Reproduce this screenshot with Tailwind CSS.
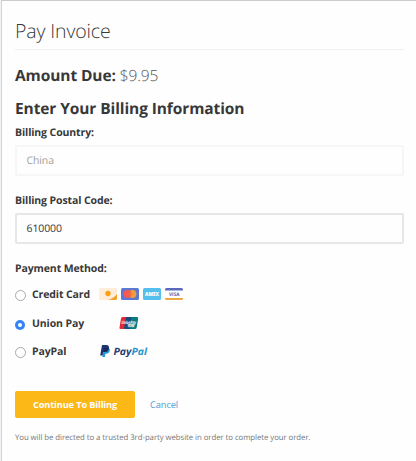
<!DOCTYPE html>
<html lang="en">
<head>
<meta charset="utf-8">
<title>Pay Invoice</title>
<script src="https://cdn.jsdelivr.net/npm/@tailwindcss/browser@4"></script>
</head>
<body class="bg-[#f0f4f7] font-['Open_Sans','Noto_Sans',sans-serif] text-[#383838] [text-rendering:geometricPrecision]">
<main class="ml-px flex h-[461px] flex-col overflow-hidden border-t border-l border-t-[#cbcbcb] border-l-[#ccd4da] bg-[#fefefe] pr-3 pl-[13px] whitespace-nowrap">
  <h1 class="h-[49px] border-b border-[#f0f0f0] pt-4 text-[19.5px] leading-[28px] font-light tracking-[-0.13px]"><span>Pay Invoice</span></h1>
  <p class="mt-[14px] text-[15.5px] leading-[22px] tracking-[-0.1px]"><b class="font-bold">Amount Due:</b> <span class="font-light text-[#555]">$9.95</span></p>
  <h2 class="mt-[11px] text-[15.5px] leading-[22px] font-bold tracking-[-0.1px]"><span>Enter Your Billing Information</span></h2>
  <form class="flex flex-col text-[10.5px] leading-[16px] font-bold tracking-[-0.11px]">
    <label class="mt-[6px]"><span>Billing Country:</span></label>
    <div class="mt-[4px] flex h-[31px] items-center rounded-[2px] border-2 border-[#f6f6f6] pl-[9.5px] font-normal text-[#a0a0a0]"><span>China</span></div>
    <label class="mt-[17px]"><span>Billing Postal Code:</span></label>
    <div class="mt-[4px] flex h-[31px] items-center rounded-[2px] border-2 border-[#e6e7e9] pl-[9.5px] font-normal"><span>610000</span></div>
    <label class="mt-[17px]"><span>Payment Method:</span></label>
    <div class="mt-[9px] flex h-4 items-center">
      <i class="mt-[3px] h-[11px] w-[11px] rounded-full border border-[#a8a8a8] bg-white"></i>
      <span class="mt-px ml-[6px] w-[67px]">Credit Card</span>
      <svg class="h-3 w-[84px]" viewBox="0 0 84 12" font-family="Open Sans" font-weight="800" letter-spacing="0">
        <rect width="18" height="12" rx="1.5" fill="#ffedda"/>
        <path d="M18 6V10.5Q18 12 16.500 12H9Q15 10 18 6Z" fill="#f6a128"/>
        <circle cx="9" cy="5.500" r="2.700" fill="#fca017"/>
        <rect x="22" width="18" height="12" rx="1.500" fill="#5f78cf"/>
        <circle cx="33.500" cy="6" r="3.900" fill="#f59b3d"/>
        <circle cx="28.500" cy="6" r="3.900" fill="#f45755"/>
        <path d="M31 3Q33.800 6 31 9Q28.200 6 31 3Z" fill="#ef7134"/>
        <rect x="44" width="18" height="12" rx="1.500" fill="#54bfec"/>
        <text x="46" y="8" font-size="5.500" textLength="14" lengthAdjust="spacingAndGlyphs" fill="#fff">AMEX</text>
        <path d="M66 2.500V1.500Q66 0 67.500 0H82.500Q84 0 84 1.500V2.500Z" fill="#5b68bd"/>
        <path d="M66 10H84V10.500Q84 12 82.500 12H67.500Q66 12 66 10.500Z" fill="#eca941"/>
        <text x="70" y="8" font-size="5" font-weight="700" textLength="10.500" lengthAdjust="spacingAndGlyphs" fill="#5565b0">VISA</text>
      </svg>
    </div>
    <div class="mt-[13px] flex h-4 items-center">
      <i class="mt-[3px] flex h-[10px] w-[10px] items-center justify-center rounded-full bg-[#3484f5]"><i class="h-1 w-1 rounded-full bg-white"></i></i>
      <span class="mt-[2px] ml-[7px] w-[87px]">Union Pay</span>
      <svg class="h-3 w-[20px] overflow-visible" viewBox="0 0 20 12" font-family="Open Sans" font-weight="700" letter-spacing="0">
        <path d="M3.500 0H9L6.500 12H1.500Q.3 12 .5 10.500L2 1.500Q2.200 0 3.500 0Z" fill="#df2938"/>
        <path d="M8 0H14L11.500 12H6.300Q5 12 5.200 10.500L6.800 1.500Q7 0 8 0Z" fill="#114d80"/>
        <path d="M13 0H18Q19.500 0 19.200 1.500L17.700 10.500Q17.500 12 16 12H10.800L12 1.300Q12.200 0 13 0Z" fill="#087b7e"/>
        <text x="2.500" y="6.500" font-size="4.500" font-style="italic" textLength="14.500" lengthAdjust="spacingAndGlyphs" fill="#fff">UnionPay</text>
        <text x="8.500" y="10" font-size="3.600" font-family="Noto Sans CJK SC" textLength="7" lengthAdjust="spacingAndGlyphs" fill="#fff">银联</text>
      </svg>
    </div>
    <div class="mt-[12px] flex h-4 items-center">
      <i class="mt-[3px] h-[11px] w-[11px] rounded-full border border-[#a8a8a8] bg-white"></i>
      <span class="mt-px ml-[6px] w-[68px]">PayPal</span>
      <svg class="h-3 w-[48px]" viewBox="0 0 48 12" font-family="Open Sans" font-weight="700" font-style="italic" letter-spacing="0">
        <path d="M4 3H8.600Q10.500 4 9.700 6Q9 8.800 6.300 8.800H5.400L4.900 12H2.300Z" fill="#209bd7"/>
        <path d="M2 0H6.300Q9.600 .2 8.900 3.500Q8.200 7 4.500 7H3.200L2.600 10.400H.2Z" fill="#20346f"/>
        <path d="M4 3H8.800Q8.300 6.900 4.500 7H3.300Z" fill="#1b285b"/>
        <text x="13.500" y="9.500" font-size="10" textLength="18" lengthAdjust="spacingAndGlyphs" fill="#263c78">Pay</text>
        <text x="31.500" y="9.500" font-size="10" textLength="15.500" lengthAdjust="spacingAndGlyphs" fill="#2794cd">Pal</text>
      </svg>
    </div>
    <div class="mt-[32px] flex h-[27px] items-center">
      <button type="button" class="h-[27px] w-[120px] rounded-[2px] bg-[#fcb817] text-[9.2px] tracking-[-0.12px] text-white"><span>Continue To Billing</span></button>
      <a class="mt-px ml-[15px] text-[9.3px] font-normal text-[#4b9fd5]">Cancel</a>
    </div>
  </form>
  <p class="mt-[14px] text-[7.8px] leading-[12px] tracking-[-0.06px] text-[#777]"><span>You will be directed to a trusted 3rd-party website in order to complete your order.</span></p>
</main>
</body>
</html>
